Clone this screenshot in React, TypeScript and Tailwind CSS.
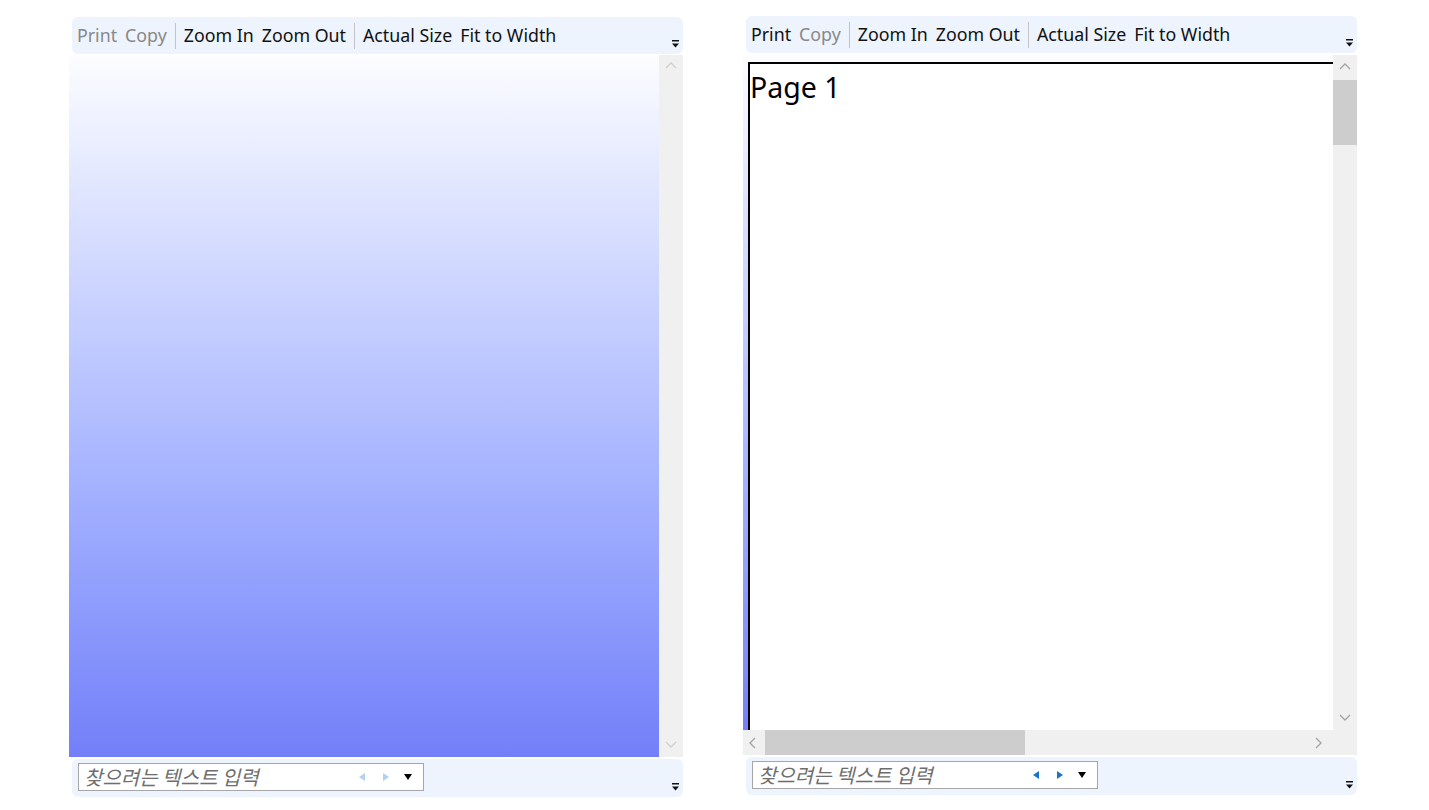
import React from 'react';

const font = { fontFamily: '"Noto Sans", "Open Sans", sans-serif' };

function OverflowIcon() {
  return (
    <svg width="9" height="9" viewBox="0 0 9 9">
      <rect x="1" y="0" width="7" height="1.5" fill="#111" />
      <path d="M1 3.5h7L4.5 7.5z" fill="#111" />
    </svg>
  );
}

function Chevron({ dir, color }: { dir: 'up' | 'down' | 'left' | 'right'; color: string }) {
  const d = {
    up: 'M2 8l5-5 5 5',
    down: 'M2 4l5 5 5-5',
    left: 'M8 2L3 7l5 5',
    right: 'M5 2l5 5-5 5',
  }[dir];
  return (
    <svg width="14" height="14" viewBox="0 0 14 14">
      <path d={d} fill="none" stroke={color} strokeWidth="1.3" />
    </svg>
  );
}

function Toolbar({ printEnabled }: { printEnabled: boolean }) {
  return (
    <div className="ml-[3px] flex h-[37px] items-center rounded-md bg-[#edf4fd] pl-px pr-[3px] text-[17.8px] text-[#111]" style={font}>
      <span className={printEnabled ? 'px-1' : 'px-1 text-[#888]'}>Print</span>
      <span className="px-1 text-[#888]">Copy</span>
      <span className="mx-1 h-[26px] w-px bg-[#c4c4c4]" />
      <span className="px-1">Zoom In</span>
      <span className="px-1">Zoom Out</span>
      <span className="mx-1 h-[26px] w-px bg-[#c4c4c4]" />
      <span className="px-1">Actual Size</span>
      <span className="px-1">Fit to Width</span>
      <span className="ml-auto self-end pb-[5px]">
        <OverflowIcon />
      </span>
    </div>
  );
}

function SearchBar({ active }: { active: boolean }) {
  const arrow = active ? '#1a72c9' : '#b3d1ee';
  return (
    <div className="ml-[3px] flex h-[38px] items-start rounded-md bg-[#edf4fd] pr-[3px]">
      <div className="ml-[6px] mt-[4px] flex h-[28px] w-[346px] items-center border border-[#a6a6a6] bg-white pl-[5px] pr-[10px]">
        <span
          className="flex-1 text-[20px] leading-[26px] italic text-[#6e6e6e]"
          style={{ fontFamily: '"Noto Sans CJK KR", "Noto Sans", sans-serif' }}
        >
          찾으려는 텍스트 입력
        </span>
        <svg width="10" height="10" viewBox="0 0 10 10" className="mr-[14px]">
          <path d="M8 1v8L2 5z" fill={arrow} />
        </svg>
        <svg width="10" height="10" viewBox="0 0 10 10" className="mr-[12px]">
          <path d="M2 1v8l6-4z" fill={arrow} />
        </svg>
        <svg width="10" height="10" viewBox="0 0 10 10">
          <path d="M1 2h8L5 8z" fill="#000" />
        </svg>
      </div>
      <span className="ml-auto self-end pb-[5px]">
        <OverflowIcon />
      </span>
    </div>
  );
}

function LeftViewer() {
  return (
    <div className="mt-[17px] flex w-[614px] flex-col">
      <Toolbar printEnabled={false} />
      <div className="mt-px flex h-[702px]">
        <div className="w-[590px] bg-linear-to-b from-[#fdfdff] to-[#737ff9]" />
        <div className="flex w-[24px] flex-col items-center justify-between bg-[#f0f0f0] py-[5px]">
          <Chevron dir="up" color="#cfcfcf" />
          <Chevron dir="down" color="#cfcfcf" />
        </div>
      </div>
      <div className="mt-[2px]">
        <SearchBar active={false} />
      </div>
    </div>
  );
}

function RightViewer() {
  return (
    <div className="mt-[16px] flex w-[614px] flex-col">
      <Toolbar printEnabled={true} />
      <div className="mt-[2px] grid grid-cols-[590px_24px] grid-rows-[675px_25px]">
        <div className="overflow-hidden bg-linear-to-b from-[#fdfdff] to-[#737ff9] pl-[5px] pt-[7px]">
          <div className="h-[720px] w-[700px] border-l-2 border-t-2 border-black bg-white pt-[6px]">
            <span className="text-[28.5px] leading-[34px] text-black" style={font}>
              Page 1
            </span>
          </div>
        </div>
        <div className="flex flex-col items-center bg-[#f0f0f0]">
          <div className="flex h-[25px] items-center">
            <Chevron dir="up" color="#a3a3a3" />
          </div>
          <div className="h-[65px] w-full bg-[#cdcdcd]" />
          <div className="mt-auto flex h-[25px] items-center">
            <Chevron dir="down" color="#a3a3a3" />
          </div>
        </div>
        <div className="flex items-center bg-[#f0f0f0]">
          <div className="flex w-[22px] justify-center">
            <Chevron dir="left" color="#a3a3a3" />
          </div>
          <div className="h-full w-[260px] bg-[#cdcdcd]" />
          <div className="ml-auto mr-[5px] flex w-[20px] justify-center">
            <Chevron dir="right" color="#a3a3a3" />
          </div>
        </div>
        <div className="bg-[#f0f0f0]" />
      </div>
      <div className="mt-[2px]">
        <SearchBar active={true} />
      </div>
    </div>
  );
}

export default function App() {
  return (
    <div className="flex h-[810px] w-[1429px] items-start gap-[60px] overflow-hidden bg-white pl-[69px]">
      <LeftViewer />
      <RightViewer />
    </div>
  );
}
